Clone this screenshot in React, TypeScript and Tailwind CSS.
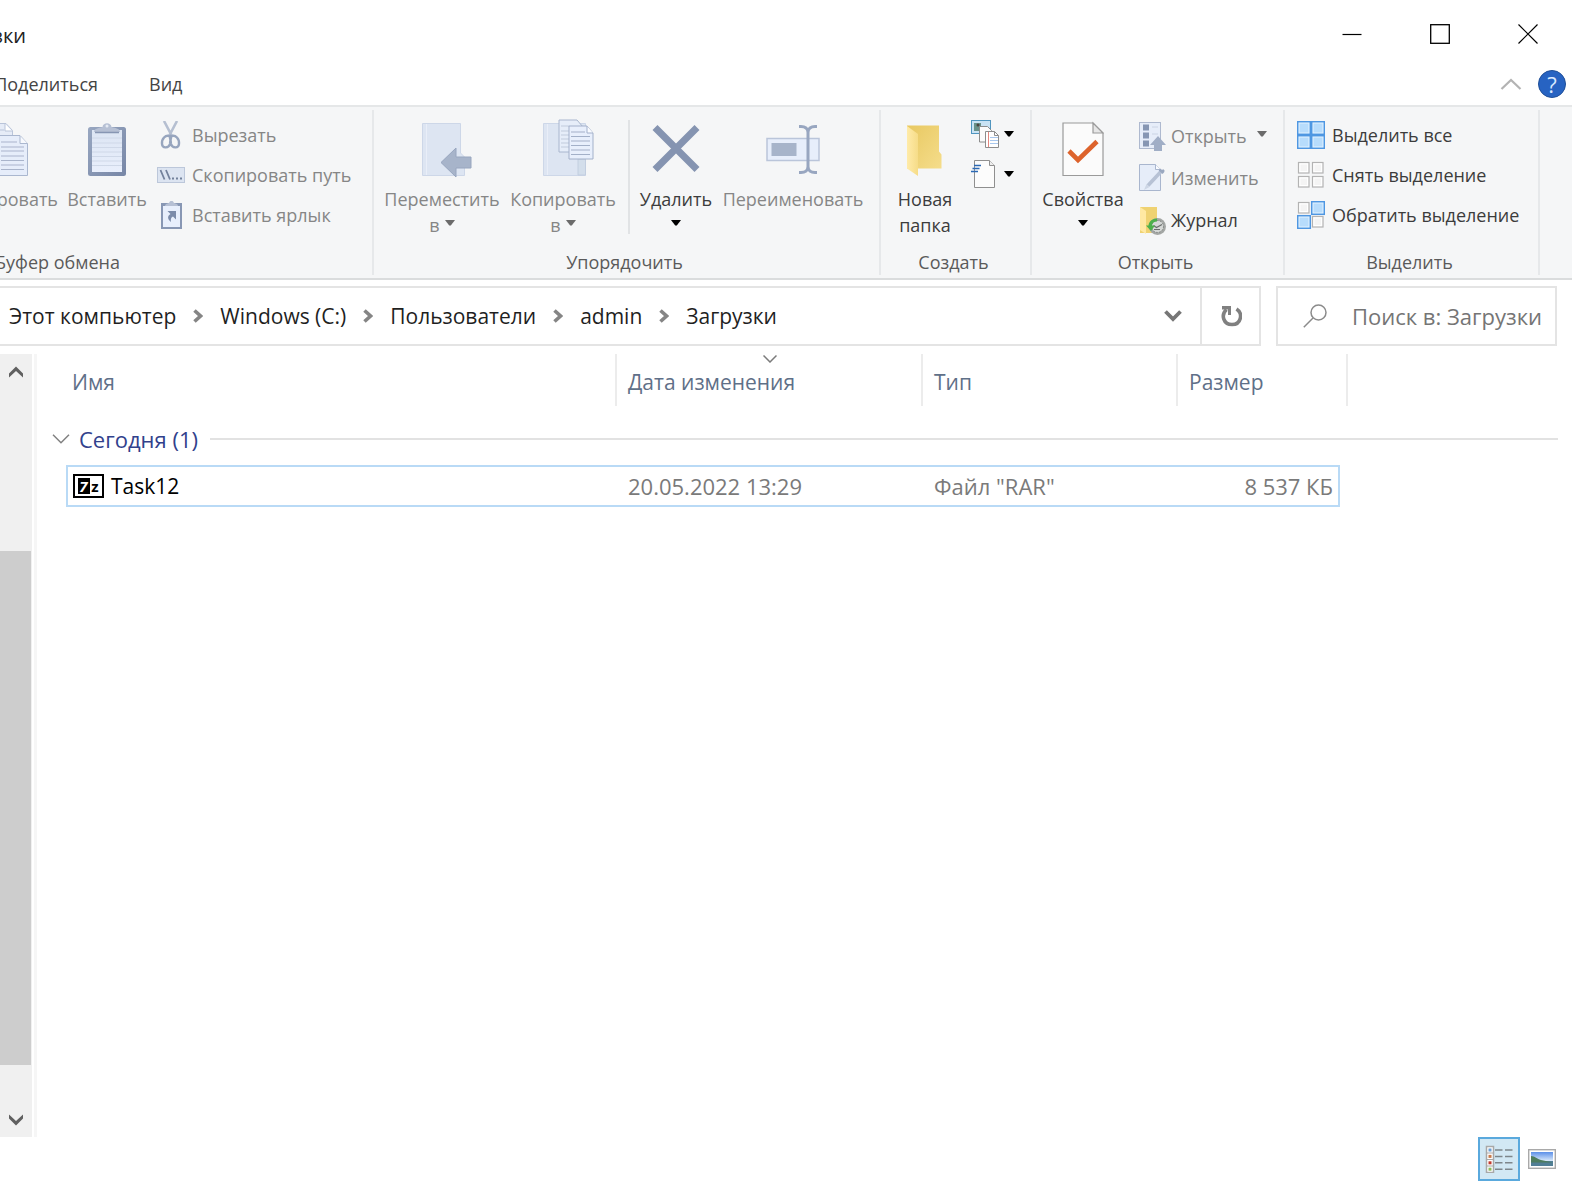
import { useState, type ReactNode } from "react";
import { clsx } from "clsx";

type IconProps = { className?: string };

function Caret({ className }: IconProps) {
  return (
    <svg viewBox="0 0 10 6" className={clsx("h-[6px] w-[10px] shrink-0", className)} aria-hidden>
      <path d="M0 0h10L5.8 5.4H4.2Z" fill="currentColor" />
    </svg>
  );
}

function CopyIcon() {
  return (
    <svg viewBox="0 0 28 58" className="h-[58px] w-[28px] self-start" aria-hidden>
      <path d="M-4 3.500H6l6.500 7V41H-4Z" fill="#e6ecf7" stroke="#b9c4d9" />
      <path d="M5 4v7h7" fill="#fff" stroke="#b9c4d9" />
      <path d="M-4 10H4" stroke="#b9c4d9" />
      <path d="M-4 15.500H20l7.500 8V55.500H-4Z" fill="#e6edfa" stroke="#aab7cf" />
      <path d="M20 16v7.500h7.500" fill="#f7f9fd" stroke="#aab7cf" />
      <path d="M1 22h16M1 27h23M1 31h23M1 36h23M1 40.500h23M1 45h23M1 49.500h23" stroke="#a9b4cb" strokeWidth="1.200" />
    </svg>
  );
}

function PasteIcon() {
  return (
    <svg viewBox="0 1 38 58" className="h-[58px] w-[38px]" aria-hidden>
      <defs>
        <linearGradient id="board" x1="0" y1="0" x2="1" y2="1">
          <stop offset="0" stopColor="#98a7c1" />
          <stop offset="1" stopColor="#7786a6" />
        </linearGradient>
        <linearGradient id="sheet" x1="0" y1="0" x2="0" y2="1">
          <stop offset="0" stopColor="#dce5f3" />
          <stop offset="1" stopColor="#e9effc" />
        </linearGradient>
      </defs>
      <rect y="8" width="38" height="49" rx="2.500" fill="url(#board)" />
      <path d="M4 11h30v42H4Z" fill="url(#sheet)" />
      <path d="M4 19h30M4 24h30M4 28.500h30M4 33h30M4 37.500h30M4 42h30M4 46.500h30" stroke="#cfd8e8" />
      <path d="M6 13c0-3 4-4 8.500-5 .5-5 8.500-5 9 0 4.500 1 8.500 2 8.500 5Z" fill="#b6c0d4" />
      <path d="M7 13.500h24" stroke="#8796b3" strokeWidth="1.500" />
      <circle cx="19" cy="7" r="1.500" fill="#e5eaf4" />
    </svg>
  );
}

function CutIcon() {
  return (
    <svg viewBox="0 0 28 28" className="h-[28px] w-[28px]" aria-hidden>
      <path d="M7 0l9 17M20 0l-9 17" stroke="#b5bfd1" strokeWidth="2.600" />
      <path d="M12.500 15c-4-1.500-8 3-7.500 8 .5 5 7 4 8 0 .5-3 .5-6-.5-8ZM14.500 15c4-1.500 8 3 7.500 8-.5 5-7 4-8 0-.5-3-.5-6 .5-8Z" fill="#f5f6f7" stroke="#97a5be" strokeWidth="2.400" />
      <circle cx="13.500" cy="15" r="1.500" fill="#97a5be" />
    </svg>
  );
}

function PathIcon() {
  return (
    <svg viewBox="0 0 28 28" className="h-[28px] w-[28px]" aria-hidden>
      <rect x=".5" y="6.500" width="27" height="15" fill="#dce4f1" stroke="#bcc7da" />
      <path d="M3.500 9l4 9.500M9 9l4 9.500" stroke="#73819b" strokeWidth="1.800" />
      <path d="M15 17.500h2M19 17.500h2M23 17.500h2" stroke="#73819b" strokeWidth="2" />
    </svg>
  );
}

function ShortcutIcon() {
  return (
    <svg viewBox="0 0 28 28" className="h-[28px] w-[28px]" aria-hidden>
      <path d="M4 2h21v26H4Z" fill="#8897b4" />
      <path d="M6 5h17v21H6Z" fill="#e8effc" />
      <path d="M8 5c0-2 2-2.500 4-3 1-3 4-3 5 0 2 .5 4 1 4 3Z" fill="#b6c0d4" />
      <path d="M10.500 10h8.500v8.500l-3-3c-2 1-2.500 2.500-2 5.500-4-3-3.500-6.500-.5-8Z" fill="#7c8caa" />
    </svg>
  );
}

function MoveIcon() {
  return (
    <svg viewBox="-11 1 62 58" className="h-[58px] w-[62px]" aria-hidden>
      <path d="M.5 4.500h38V34l4 4v18.500H.5Z" fill="#dde5f2" stroke="#cdd7e8" />
      <path d="M4.500 5v51" stroke="#e9eef8" />
      <path d="M19 43.500L34 29v9h15v11H34v9Z" fill="#a7b4ca" stroke="#98a6bf" />
    </svg>
  );
}

function CopyToIcon() {
  return (
    <svg viewBox="-12 1 64 58" className="h-[58px] w-[64px] overflow-visible" aria-hidden>
      <path d="M.5 4.500h42v52H.5Z" fill="#dde5f2" stroke="#cdd7e8" />
      <path d="M4.500 5v51" stroke="#e9eef8" />
      <path d="M35 40v16h7.500V40Z" fill="#d3deeb" stroke="#c2cee0" />
      <path d="M16 1h18l6 7v25H16Z" fill="#e6edf9" stroke="#a9b6ce" />
      <path d="M18 7h8M18 12h8M18 16h8M18 20h8M18 24h8M18 28h8" stroke="#c1cbdc" />
      <path d="M26 7h18l6 7v26H26Z" fill="#e8effc" stroke="#a3b0ca" />
      <path d="M44 7v7h6" fill="#f9fbff" stroke="#a3b0ca" />
      <path d="M28 13h14M28 17.500h19M28 22h19M28 26.500h19M28 31h19M28 35.500h19" stroke="#a3b0c8" strokeWidth="1.200" />
    </svg>
  );
}

function DeleteIcon() {
  return (
    <svg viewBox="0 0 48 58" className="h-[58px] w-[48px]" aria-hidden>
      <path d="M3 7.500l42 42M45 7.500l-42 42" stroke="#8594b1" strokeWidth="7" />
    </svg>
  );
}

function RenameIcon() {
  return (
    <svg viewBox="0 1 54 58" className="h-[58px] w-[54px]" aria-hidden>
      <rect x="1" y="19.500" width="52" height="22" fill="#e7eefb" stroke="#bac5da" strokeWidth="1.500" />
      <rect x="5.500" y="24" width="25" height="13" fill="#a7b4ca" />
      <path d="M33 7.500h2c4 0 7 2 7 6 0-4 3-6 7-6h2M33 53.500h2c4 0 7-2 7-6 0 4 3 6 7 6h2M42 12v37" fill="none" stroke="#98a6c0" strokeWidth="3" />
    </svg>
  );
}

function FolderIcon() {
  return (
    <svg viewBox="0 1 36 58" className="h-[58px] w-[36px]" aria-hidden>
      <defs>
        <linearGradient id="back" x1="0" y1="0" x2="1" y2="1">
          <stop offset="0" stopColor="#e8c861" />
          <stop offset="1" stopColor="#f5dd8b" />
        </linearGradient>
        <linearGradient id="flap" x1="0" y1="0" x2="1" y2="0">
          <stop offset="0" stopColor="#ffeba9" />
          <stop offset="1" stopColor="#f6dc88" />
        </linearGradient>
      </defs>
      <path d="M0 6.500h32v26l2.500 3v14H0Z" fill="url(#back)" />
      <path d="M0 7l11 8v42L0 49.500Z" fill="url(#flap)" />
    </svg>
  );
}

function NewItemIcon() {
  return (
    <svg viewBox="0 0 28 28" className="h-[28px] w-[28px]" aria-hidden>
      <rect x=".5" y=".5" width="19" height="13" fill="#c9e3f4" stroke="#4f95bf" />
      <path d="M3 3h7v8H3Z" fill="#69928a" />
      <circle cx="7" cy="5" r="1.500" fill="#4d4540" />
      <path d="M8.500 6.500h8l4 4V22h-12Z" fill="#fbfbfb" stroke="#8d8d8d" />
      <path d="M14.500 11.500h9l4 4v12h-13Z" fill="#fff" stroke="#8d8d8d" />
      <path d="M23.500 11.500v4h4" fill="none" stroke="#8d8d8d" />
      <path d="M19 17.500h8M19 20.500h8M19 23.500h8" stroke="#a9c8ee" />
      <path d="M17.500 12v15" stroke="#e3877f" />
    </svg>
  );
}

function EasyAccessIcon() {
  return (
    <svg viewBox="0 0 28 28" className="h-[28px] w-[28px]" aria-hidden>
      <path d="M3.500.5h15l5 5v22h-20Z" fill="#fcfcfc" stroke="#8f8f8f" />
      <path d="M18.500.5v5h5" fill="#eee" stroke="#8f8f8f" />
      <path d="M3 5.500h7M1.500 8.500h7M0 11.500h7" stroke="#2b69b5" strokeWidth="1.500" />
    </svg>
  );
}

function PropertiesIcon() {
  return (
    <svg viewBox="0 1 42 58" className="h-[58px] w-[42px]" aria-hidden>
      <path d="M1 4h30l10 10v42.500H1Z" fill="#fbfbfb" stroke="#9a9a9a" strokeWidth="1.200" />
      <path d="M31 4v10h10Z" fill="#e6e6e6" stroke="#9a9a9a" strokeWidth="1.200" />
      <path d="M7 32l9 9L35 22.500" fill="none" stroke="#dd632c" strokeWidth="4.600" />
    </svg>
  );
}

function OpenIcon() {
  return (
    <svg viewBox="0 0 28 30" className="h-[30px] w-[28px]" aria-hidden>
      <rect x=".5" y="1.500" width="21" height="26" fill="#e6edf9" stroke="#aeb9cf" />
      <path d="M4 3.500h6v6H4ZM4 11.500h6v6H4ZM4 19.500h6v6H4Z" fill="#8696b3" />
      <path d="M13 6h6M13 13h6" stroke="#cbd4e4" />
      <path d="M19 15l8 9h-4v6h-8v-6h-4Z" fill="#a0aec6" />
    </svg>
  );
}

function EditIcon() {
  return (
    <svg viewBox="0 0 28 30" className="h-[30px] w-[28px]" aria-hidden>
      <path d="M.5 1.500h16l5 5v21H.5Z" fill="#e6edf9" stroke="#a9b6ce" />
      <path d="M16.500 1.500v5h5" fill="#f9fbff" stroke="#a9b6ce" />
      <path d="M22.500 8L9 22.500" stroke="#b7c2d5" strokeWidth="3.600" />
      <path d="M7.500 21l3 3-5.500 3Z" fill="#cdd6e5" />
      <path d="M20.500 6.500l4 3.500M25 7l-1.500 1.500" stroke="#9aa8c0" strokeWidth="2.500" />
    </svg>
  );
}

function HistoryIcon() {
  return (
    <svg viewBox="0 0 28 30" className="h-[30px] w-[28px]" aria-hidden>
      <path d="M1 2h17v26H1Z" fill="#efd272" />
      <path d="M1 2l6 4v23l-6-4Z" fill="#ffe9a3" />
      <circle cx="18.500" cy="21.500" r="8.500" fill="#a4a7a5" />
      <circle cx="18.500" cy="21.500" r="6" fill="#d5d8d6" stroke="#7d817f" strokeDasharray="1.500 1.500" />
      <path d="M14.500 20.500l3 2 5.500-3M15 24.500h6" fill="none" stroke="#686c6a" strokeWidth="1.200" />
      <path d="M18 13.500c-5 0-8 3-8.500 7H7l5 5.500 4-5.500h-3c.3-2.500 2-4 5-4Z" fill="#4bb04a" />
    </svg>
  );
}

function SelectSquares({ on }: { on: [boolean, boolean, boolean, boolean] }) {
  const spots = [
    [0, 0],
    [14, 0],
    [0, 14],
    [14, 14],
  ];
  return (
    <svg viewBox="0 0 28 28" className="h-[28px] w-[28px]" aria-hidden>
      {spots.map(([x, y], i) =>
        on[i] ? null : (
          <g key={i}>
            <rect x={x + 1.500} y={y + 1.500} width="10.500" height="10.500" fill="#fff" stroke="#b3b3b3" strokeWidth="1.200" />
            <rect x={x + 3.500} y={y + 3.500} width="6.500" height="6.500" fill="#f4f4f4" />
          </g>
        ),
      )}
      {spots.map(([x, y], i) =>
        on[i] ? (
          <g key={i}>
            <rect x={x + 0.700} y={y + 0.700} width="12.600" height="12.600" fill="#e2f2ff" stroke="#4f97e2" strokeWidth="1.500" />
            <rect x={x + 2.500} y={y + 2.500} width="9" height="9" fill="#b7dcfc" />
          </g>
        ) : null,
      )}
    </svg>
  );
}

type GroupProps = { title: string; className: string; titleClassName?: string; children: ReactNode };

function RibbonGroup({ title, className, titleClassName = "justify-center pr-[4px]", children }: GroupProps) {
  return (
    <section
      className={clsx("my-[3px] flex shrink-0 flex-col overflow-hidden border-r-2 border-[#e6e8ea]", className)}
    >
      <div className="flex h-[139px] pt-[10px]">{children}</div>
      <h2 className={clsx("flex whitespace-nowrap text-[18px] leading-[26px] text-[#5a5a5a]", titleClassName)}>
        {title}
      </h2>
    </section>
  );
}

type ButtonProps = {
  icon: ReactNode;
  label: string;
  disabled?: boolean;
  className?: string;
};

function BigButton({
  icon,
  label,
  second,
  caret,
  disabled,
  className,
}: ButtonProps & { second?: string; caret?: boolean }) {
  return (
    <button
      type="button"
      disabled={disabled}
      className={clsx(
        "flex shrink-0 flex-col items-center whitespace-nowrap text-[18px] leading-[26px]",
        disabled ? "text-[#868686]" : "text-[#3c3c3c]",
        className,
      )}
    >
      {icon}
      <span className="mt-[8px]">{label}</span>
      {(second || caret) && (
        <span className="flex h-[26px] items-center gap-[5px]">
          {second}
          {caret && <Caret className={clsx("mb-[4px]", disabled ? "text-[#6b6b6b]" : "text-black")} />}
        </span>
      )}
    </button>
  );
}

function SmallButton({ icon, label, disabled, caret, className }: ButtonProps & { caret?: boolean }) {
  return (
    <button
      type="button"
      disabled={disabled}
      className={clsx(
        "flex items-center whitespace-nowrap text-[18px] leading-[30px]",
        disabled ? "text-[#868686]" : "text-[#3c3c3c]",
        className,
      )}
    >
      {icon}
      {label}
      {caret && <Caret className="mb-[4px] ml-[6px] text-[#6b6b6b]" />}
    </button>
  );
}

function Ribbon() {
  return (
    <div className="mr-[22px] flex overflow-hidden border-t-2 border-b-2 border-t-[#e5e7e8] border-b-[#dadcdd] bg-[#f5f6f7]">
      <RibbonGroup title="Буфер обмена" className="w-[374px]" titleClassName="w-[120px] justify-end">
        <BigButton icon={<CopyIcon />} label="ровать" disabled className="w-[58px] !items-end" />
        <BigButton icon={<PasteIcon />} label="Вставить" disabled className="ml-[5px] w-[88px]" />
        <div className="ml-[6px] flex flex-col items-start gap-[10px]">
          <SmallButton icon={<CutIcon />} label="Вырезать" disabled className="gap-[7px]" />
          <SmallButton icon={<PathIcon />} label="Скопировать путь" disabled className="gap-[7px]" />
          <SmallButton icon={<ShortcutIcon />} label="Вставить ярлык" disabled className="gap-[7px]" />
        </div>
      </RibbonGroup>

      <RibbonGroup title="Упорядочить" className="w-[507px]">
        <BigButton icon={<MoveIcon />} label="Переместить" second="в" caret disabled className="ml-[7px] w-[122px]" />
        <BigButton icon={<CopyToIcon />} label="Копировать" second="в" caret disabled className="w-[120px]" />
        <div className="ml-[5px] h-[114px] w-[2px] shrink-0 bg-[#e1e3e5]" />
        <BigButton icon={<DeleteIcon />} label="Удалить" caret className="ml-[5px] w-[82px]" />
        <BigButton icon={<RenameIcon />} label="Переименовать" disabled className="ml-[2px] w-[148px]" />
      </RibbonGroup>

      <RibbonGroup title="Создать" className="w-[151px]">
        <BigButton icon={<FolderIcon />} label="Новая" second="папка" className="ml-[9px] w-[70px]" />
        <div className="ml-[11px] flex flex-col gap-[12px]">
          <button type="button" aria-label="Создать элемент" className="flex items-center gap-[5px] text-black">
            <NewItemIcon />
            <Caret />
          </button>
          <button type="button" aria-label="Простой доступ" className="flex items-center gap-[5px] text-black">
            <EasyAccessIcon />
            <Caret />
          </button>
        </div>
      </RibbonGroup>

      <RibbonGroup title="Открыть" className="w-[253px]">
        <BigButton icon={<PropertiesIcon />} label="Свойства" caret className="ml-[5px] w-[92px]" />
        <div className="ml-[10px] flex flex-col items-start gap-[12px] pt-[1px]">
          <SmallButton icon={<OpenIcon />} label="Открыть" caret disabled className="gap-[4px]" />
          <SmallButton icon={<EditIcon />} label="Изменить" disabled className="gap-[4px]" />
          <SmallButton icon={<HistoryIcon />} label="Журнал" className="gap-[4px]" />
        </div>
      </RibbonGroup>

      <RibbonGroup title="Выделить" className="w-[255px]">
        <div className="ml-[12px] flex flex-col items-start gap-[10px]">
          <SmallButton icon={<SelectSquares on={[true, true, true, true]} />} label="Выделить все" className="gap-[7px]" />
          <SmallButton icon={<SelectSquares on={[false, false, false, false]} />} label="Снять выделение" className="gap-[7px]" />
          <SmallButton icon={<SelectSquares on={[false, true, true, false]} />} label="Обратить выделение" className="gap-[7px]" />
        </div>
      </RibbonGroup>
    </div>
  );
}

function TitleBar() {
  return (
    <header className="flex h-[68px] items-center justify-between">
      <h1 className="flex w-[26px] justify-end overflow-hidden pt-[4px] text-[20px] leading-[30px] text-[#222]">
        <span className="shrink-0">зки</span>
      </h1>
      <div className="mr-[22px] flex text-black">
        <button type="button" aria-label="Свернуть" className="flex h-[40px] w-[88px] items-center justify-center">
          <svg viewBox="0 0 20 20" className="h-[20px] w-[20px]" aria-hidden>
            <path d="M.5 10.500h19" stroke="currentColor" strokeWidth="1.200" />
          </svg>
        </button>
        <button type="button" aria-label="Развернуть" className="flex h-[40px] w-[88px] items-center justify-center">
          <svg viewBox="0 0 20 20" className="h-[20px] w-[20px]" aria-hidden>
            <rect x=".7" y=".7" width="18.600" height="18.600" fill="none" stroke="currentColor" strokeWidth="1.300" />
          </svg>
        </button>
        <button type="button" aria-label="Закрыть" className="flex h-[40px] w-[88px] items-center justify-center">
          <svg viewBox="0 0 20 20" className="h-[20px] w-[20px]" aria-hidden>
            <path d="M.5.5l19 19M19.500.5l-19 19" stroke="currentColor" strokeWidth="1.200" />
          </svg>
        </button>
      </div>
    </header>
  );
}

function TabBar() {
  return (
    <div className="flex h-[37px] items-center justify-between pb-[5px]">
      <nav className="flex items-center text-[18px] leading-[30px] text-[#444]">
        <button type="button" className="flex w-[98px] justify-end overflow-hidden">
          <span className="shrink-0">Поделиться</span>
        </button>
        <button type="button" className="ml-[51px]">
          Вид
        </button>
      </nav>
      <div className="mr-[28px] flex items-center gap-[16px]">
        <button type="button" aria-label="Свернуть ленту">
          <svg viewBox="0 0 22 12" className="h-[12px] w-[22px]" aria-hidden>
            <path d="M1.500 11L11 2l9.500 9" fill="none" stroke="#b3b3b3" strokeWidth="2.200" />
          </svg>
        </button>
        <button
          type="button"
          className="flex h-[28px] w-[28px] items-center justify-center rounded-full border border-[#1f4f98] bg-[#2763c2] text-[22px] leading-[26px] text-[#d9eaff]"
        >
          ?
        </button>
      </div>
    </div>
  );
}

const CRUMBS = ["Этот компьютер", "Windows (C:)", "Пользователи", "admin", "Загрузки"];

function AddressBar() {
  const [query, setQuery] = useState("");

  return (
    <div className="mt-[6px] mr-[37px] flex h-[60px] gap-[15px]">
      <div className="flex min-w-0 flex-1 border-2 border-l-0 border-[#e4e4e4]">
        <nav className="flex flex-1 items-center overflow-hidden pl-[9px]">
          {CRUMBS.map((crumb, index) => (
            <span key={crumb} className="flex shrink-0 items-center">
              {index > 0 && (
                <svg viewBox="0 0 10 14" className="mx-[17px] h-[14px] w-[10px]" aria-hidden>
                  <path d="M1.500 1.500L7.500 7l-6 5.500" fill="none" stroke="#858585" strokeWidth="3.600" />
                </svg>
              )}
              <a href="#" className="text-[21px] leading-[30px] text-[#1f1f1f]">
                {crumb}
              </a>
            </span>
          ))}
        </nav>
        <button type="button" aria-label="Предыдущие расположения" className="flex w-[54px] items-center justify-center">
          <svg viewBox="0 0 18 12" className="h-[12px] w-[18px]" aria-hidden>
            <path d="M1.500 1.500L9 9l7.500-7.500" fill="none" stroke="#767676" strokeWidth="3.800" />
          </svg>
        </button>
        <button
          type="button"
          aria-label="Обновить"
          className="flex w-[59px] items-center justify-center border-l-2 border-[#e4e4e4]"
        >
          <svg viewBox="0 0 22 22" className="h-[22px] w-[22px]" aria-hidden>
            <path d="M6.500 4.500C.5 10 3.500 19.500 12 19.500c9 0 11.500-11 4.500-15.500" fill="none" stroke="#808080" strokeWidth="3.600" />
            <path d="M2 1h9v9H8V4.500H2Z" fill="#808080" />
          </svg>
        </button>
      </div>
      <label className="flex w-[281px] shrink-0 items-center border-2 border-[#e4e4e4] pl-[25px]">
        <svg viewBox="0 0 24 24" className="h-[24px] w-[24px] shrink-0" aria-hidden>
          <circle cx="15.500" cy="8.500" r="7.500" fill="none" stroke="#8b8b8b" strokeWidth="1.500" />
          <path d="M10 14L.8 23.200" stroke="#8b8b8b" strokeWidth="1.500" />
        </svg>
        <input
          type="text"
          value={query}
          onChange={(event) => setQuery(event.target.value)}
          placeholder="Поиск в: Загрузки"
          aria-label="Поиск в: Загрузки"
          className="ml-[25px] w-full min-w-0 bg-transparent text-[22px] leading-[30px] outline-none placeholder:text-[#757575]"
        />
      </label>
    </div>
  );
}

function ScrollBar() {
  return (
    <div className="flex w-[32px] shrink-0 flex-col bg-[#f0f0f0]">
      <button type="button" aria-label="Вверх" className="flex h-[36px] w-full items-center justify-center">
        <svg viewBox="0 0 14 12" className="h-[12px] w-[14px]" aria-hidden>
          <path d="M0 11.500V7.500L7 .5l7 7v4L7 5Z" fill="#606060" />
        </svg>
      </button>
      <div className="flex-[161]" />
      <div className="mr-px flex-[513] bg-[#cdcdcd]" />
      <div className="flex-[38]" />
      <button type="button" aria-label="Вниз" className="flex h-[34px] w-full items-center justify-center">
        <svg viewBox="0 0 14 12" className="h-[12px] w-[14px]" aria-hidden>
          <path d="M0 .5v4l7 7 7-7v-4L7 7Z" fill="#606060" />
        </svg>
      </button>
    </div>
  );
}

function FileList() {
  const head = "relative border-r-2 border-[#ececec] pt-[4px] text-left font-normal whitespace-nowrap";
  const cell = "border-y-2 border-[#b9daf6] whitespace-nowrap";

  return (
    <table className="w-full table-fixed border-separate border-spacing-0 text-[22px] leading-[30px]">
      <colgroup>
        <col className="w-[14px]" />
        <col className="w-[551px]" />
        <col className="w-[306px]" />
        <col className="w-[255px]" />
        <col className="w-[162px]" />
        <col className="w-[8px]" />
        <col />
      </colgroup>
      <thead className="text-[21px] text-[#5f7088]">
        <tr className="h-[52px]">
          <td />
          <th className={clsx(head, "pl-[6px]")}>Имя</th>
          <th className={clsx(head, "pl-[11px]")}>
            Дата изменения
            <svg viewBox="0 0 14 8" className="absolute top-[1px] left-[146px] h-[8px] w-[14px]" aria-hidden>
              <path d="M.5.5L7 7l6.500-6.500" fill="none" stroke="#7b7b7b" strokeWidth="1.500" />
            </svg>
          </th>
          <th className={clsx(head, "pl-[11px]")}>Тип</th>
          <th colSpan={2} className={clsx(head, "pl-[11px]")}>
            Размер
          </th>
          <td />
        </tr>
      </thead>
      <tbody>
        <tr className="h-[59px]">
          <th colSpan={7} className="pt-[7px] text-left font-normal">
            <button type="button" className="flex w-full items-center whitespace-nowrap text-[#31418c]">
              <svg viewBox="0 0 18 10" className="h-[10px] w-[18px]" aria-hidden>
                <path d="M1 .8l8 8 8-8" fill="none" stroke="#808080" strokeWidth="1.500" />
              </svg>
              <span className="ml-[9px]">Сегодня (1)</span>
              <span className="ml-[12px] h-[2px] flex-1 bg-[#e2e2e2]" />
            </button>
          </th>
        </tr>
        <tr className="h-[42px] text-[#7a7a7a]">
          <td />
          <td className={clsx(cell, "border-l-2 pl-[5px] text-[21px] text-black")}>
            <span className="flex items-center gap-[7px]">
              <span
                className="flex h-[24px] w-[31px] items-center justify-center gap-px border-2 border-black bg-white text-[15px] leading-[16px] font-bold"
                aria-hidden
              >
                <span className="flex h-[16px] w-[12px] items-center justify-center bg-black text-white italic">7</span>
                <span className="w-[9px] text-center">z</span>
              </span>
              Task12
            </span>
          </td>
          <td className={clsx(cell, "pl-[11px]")}>20.05.2022 13:29</td>
          <td className={clsx(cell, "pl-[11px]")}>Файл "RAR"</td>
          <td className={clsx(cell, "border-r-2 pr-[5px] text-right")}>8 537 КБ</td>
          <td />
          <td />
        </tr>
      </tbody>
    </table>
  );
}

function StatusBar() {
  const [view, setView] = useState<"details" | "thumbs">("details");
  const marks = ["#6a9fd6", "#c97a4b", "#c23a2e", "#8dba5c"];
  const selected = "border-[#5aa9dd] bg-[#d2e8f4]";

  return (
    <footer className="mr-[31px] flex h-[67px] items-start justify-end gap-[1px]">
      <button
        type="button"
        aria-label="Таблица"
        aria-pressed={view === "details"}
        onClick={() => setView("details")}
        className={clsx(
          "flex h-[44px] w-[42px] items-center justify-center border-2",
          view === "details" ? selected : "border-transparent",
        )}
      >
        <svg viewBox="0 0 28 28" className="h-[28px] w-[28px]" aria-hidden>
          <rect x="1.500" y="1.500" width="7" height="26" fill="#fff" stroke="#a8a8a8" strokeWidth="1.500" />
          {marks.map((color, i) => (
            <g key={color}>
              <path d={`M1 ${8 + i * 6.500}h8`} stroke="#a8a8a8" />
              <rect x="3.500" y={3.500 + i * 6.400} width="3" height="3" fill={color} />
              <path d={`M10 ${5 + i * 6.400}h7.500M20 ${5 + i * 6.400}h7.500`} stroke="#7e868b" strokeWidth="1.500" />
            </g>
          ))}
        </svg>
      </button>
      <button
        type="button"
        aria-label="Крупные значки"
        aria-pressed={view === "thumbs"}
        onClick={() => setView("thumbs")}
        className={clsx(
          "flex h-[44px] w-[42px] items-center justify-center border-2",
          view === "thumbs" ? selected : "border-transparent",
        )}
      >
        <svg viewBox="0 0 28 20" className="h-[20px] w-[28px]" aria-hidden>
          <defs>
            <linearGradient id="sky" x1="0" y1="0" x2="0" y2="1">
              <stop offset="0" stopColor="#5b8fe8" />
              <stop offset="1" stopColor="#dcebfb" />
            </linearGradient>
          </defs>
          <rect x=".7" y=".7" width="26.600" height="18.600" fill="#fff" stroke="#a9a9a9" strokeWidth="1.400" />
          <rect x="3" y="3" width="22" height="9" fill="url(#sky)" />
          <path d="M3 12h22v5H3Z" fill="#527f96" />
          <path d="M3 7c4 0 6 3 10 4l12 2.500H3Z" fill="#4e7d5f" />
        </svg>
      </button>
    </footer>
  );
}

export default function App() {
  return (
    <div className="flex min-h-screen flex-col overflow-hidden bg-white font-['Open_Sans','Noto_Sans',sans-serif]">
      <TitleBar />
      <TabBar />
      <Ribbon />
      <AddressBar />
      <main className="mt-[8px] flex flex-1">
        <ScrollBar />
        <div className="ml-[2px] w-[3px] shrink-0 bg-[#f6f6f6]" />
        <div className="mr-[36px] ml-[15px] min-w-0 flex-1">
          <FileList />
        </div>
      </main>
      <StatusBar />
    </div>
  );
}
